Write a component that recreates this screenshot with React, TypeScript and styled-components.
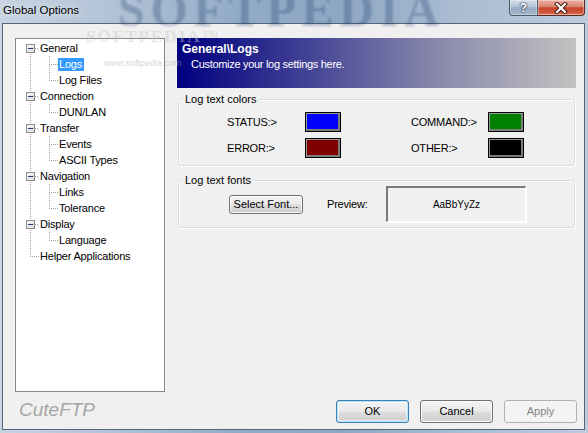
import React from 'react';
import styled, { createGlobalStyle } from 'styled-components';

const Global = createGlobalStyle`
  html, body { margin: 0; padding: 0; }
  body {
    width: 588px; height: 433px; overflow: hidden;
    background: #b9cde2;
    font-family: "Liberation Sans", Arial, sans-serif;
  }
`;

const Window = styled.div`
  position: relative;
  width: 588px;
  height: 433px;
  display: flex;
  flex-direction: column;
  overflow: hidden;
  background: linear-gradient(to right, #c8d4e2 0%, #b3c4d7 18%, #92abc7 40%, #8ea7c4 58%, #a9bcd2 78%, #bdccdd 100%);
`;

const TitleBar = styled.div`
  height: 23px;
  flex: none;
  display: flex;
  align-items: flex-start;
  position: relative;
`;

const TitleText = styled.div`
  padding: 4px 0 0 3px;
  font-size: 11.5px;
  line-height: 13px;
  color: #000;
  text-shadow: 0 0 6px rgba(255, 255, 255, 0.9);
  flex: 1;
  z-index: 1;
`;

const Controls = styled.div`
  display: flex;
  margin-right: 3px;
  z-index: 1;
`;

const CaptionButton = styled.div<{ $close?: boolean }>`
  box-sizing: border-box;
  width: ${p => (p.$close ? '47px' : '29px')};
  height: 16px;
  display: flex;
  align-items: center;
  justify-content: center;
  border: 1px solid ${p => (p.$close ? '#5a2a22' : '#4a5a6e')};
  border-top: none;
  border-left: ${p => (p.$close ? 'none' : undefined)};
  border-radius: ${p => (p.$close ? '0 0 4px 0' : '0 0 0 4px')};
  background: ${p =>
    p.$close
      ? 'linear-gradient(#eab0a3 0%, #d98670 45%, #c5452b 52%, #d1583a 85%, #e0866a 100%)'
      : 'linear-gradient(#d3dde8 0%, #b4c3d4 45%, #96abc3 52%, #a4b7cc 100%)'};
  box-shadow: inset 0 0 0 1px rgba(255, 255, 255, 0.35);
`;

const Client = styled.div`
  flex: 1;
  margin: 0 3px 3px 2px;
  border: 1px solid #55667b;
  background: #f0f0f0;
  display: flex;
  flex-direction: column;
  min-height: 0;
`;

const Body = styled.div`
  display: flex;
  gap: 12px;
  padding: 14px 0 0 12px;
`;

const Tree = styled.div`
  box-sizing: border-box;
  width: 150px;
  height: 354px;
  border: 1px solid #828790;
  background: #fff;
  padding-top: 1px;
`;

const TreeRow = styled.div`
  display: flex;
  align-items: center;
  height: 16px;
`;

const Gutter = styled.svg`
  flex: none;
  display: block;
`;

const Label = styled.span<{ $selected?: boolean }>`
  font-size: 11px;
  letter-spacing: -0.2px;
  line-height: 13px;
  height: 13px;
  padding: 0 2px 0 1px;
  white-space: nowrap;
  background: ${p => (p.$selected ? '#3399ff' : 'transparent')};
  color: ${p => (p.$selected ? '#fff' : '#000')};
`;

const Right = styled.div`
  width: 399px;
  display: flex;
  flex-direction: column;
`;

const Banner = styled.div`
  box-sizing: border-box;
  height: 50px;
  padding: 4px 0 0 5px;
  background: linear-gradient(to right, #000080 0%, #3d3d94 30%, #8888ac 65%, #c2c2c2 100%);
  color: #fff;
`;

const BannerTitle = styled.div`
  font-size: 12px;
  font-weight: bold;
  line-height: 14px;
`;

const BannerSub = styled.div`
  font-size: 11px;
  letter-spacing: -0.3px;
  line-height: 14px;
  margin: 1px 0 0 9px;
`;

const Group = styled.div<{ $top: number; $pad: string }>`
  position: relative;
  box-sizing: border-box;
  width: 397px;
  margin: ${p => p.$top}px 0 0 1px;
  padding: ${p => p.$pad};
  border: 1px solid #d5dfe5;
  border-radius: 3px;
  box-shadow: inset 1px 1px 0 #fff, 1px 1px 0 #fff;
`;

const Legend = styled.span`
  position: absolute;
  top: -7px;
  left: 4px;
  padding: 0 2px;
  background: #f0f0f0;
  font-size: 11px;
  line-height: 13px;
  color: #000;
`;

const ColorGrid = styled.div`
  display: grid;
  grid-template-columns: 78px 36px 70px 77px 36px;
  grid-auto-rows: 20px;
  row-gap: 6px;
  align-items: center;
`;

const FieldLabel = styled.span`
  font-size: 11px;
  letter-spacing: -0.2px;
  line-height: 13px;
  color: #000;
  white-space: nowrap;
`;

const Swatch = styled.div<{ $color: string }>`
  box-sizing: border-box;
  width: 36px;
  height: 20px;
  border: 1px solid #000;
  background: ${p => p.$color};
  box-shadow: inset 1px 1px 0 #9a9a9a, inset -2px -2px 0 #7d7d7d;
`;

const FontRow = styled.div`
  display: flex;
  align-items: center;
`;

const Button = styled.button<{ $variant?: 'default' | 'normal' | 'disabled' }>`
  box-sizing: border-box;
  width: 73px;
  height: 23px;
  padding: 0;
  font-family: "Liberation Sans", Arial, sans-serif;
  font-size: 11px;
  line-height: 13px;
  border-radius: 3px;
  border: 1px solid
    ${p => (p.$variant === 'default' ? '#3c7fb1' : p.$variant === 'disabled' ? '#adb2b5' : '#707070')};
  color: ${p => (p.$variant === 'disabled' ? '#838383' : '#000')};
  background: ${p =>
    p.$variant === 'disabled'
      ? '#f4f4f4'
      : 'linear-gradient(#f2f2f2 0%, #ebebeb 48%, #dddddd 52%, #cfcfcf 100%)'};
  box-shadow: ${p =>
    p.$variant === 'default'
      ? 'inset 0 0 0 1px #b6e2fb, inset 0 0 0 2px rgba(255,255,255,0.5)'
      : p.$variant === 'disabled'
      ? 'none'
      : 'inset 0 0 0 1px #fcfcfc'};
`;

const FontButton = styled(Button)`
  width: 74px;
  height: 19px;
  margin-top: 1px;
`;

const PreviewLabel = styled(FieldLabel)`
  margin: 0 0 0 24px;
  width: 59px;
`;

const PreviewBox = styled.div`
  box-sizing: border-box;
  width: 140px;
  height: 36px;
  display: flex;
  align-items: center;
  justify-content: center;
  border-style: solid;
  border-width: 2px 1px 1px 2px;
  border-color: #7a7a7a #ffffff #ffffff #7a7a7a;
  font-size: 10px;
  color: #000;
  box-shadow: 1px 1px 0 #fff;
`;

const Footer = styled.div`
  display: flex;
  align-items: center;
  height: 23px;
  margin-top: 8px;
  padding: 0 7px 0 16px;
`;

const Brand = styled.div`
  flex: 1;
  font-size: 19px;
  font-style: italic;
  color: #a6a6a6;
  line-height: 20px;
  margin-bottom: 3px;
`;

const ButtonRow = styled.div`
  display: flex;
  gap: 11px;
`;

const Watermark = styled.span<{ $x: number; $y: number; $size: number; $color: string; $serif?: boolean; $blur?: number }>`
  position: absolute;
  left: ${p => p.$x}px;
  top: ${p => p.$y}px;
  font-size: ${p => p.$size}px;
  line-height: 1;
  color: ${p => p.$color};
  font-family: ${p => (p.$serif ? '"Liberation Serif", "Times New Roman", serif' : '"Liberation Sans", Arial, sans-serif')};
  font-weight: ${p => (p.$serif ? 'bold' : 'normal')};
  letter-spacing: ${p => (p.$serif ? '0.12em' : '0')};
  filter: ${p => (p.$blur ? `blur(${p.$blur}px)` : 'none')};
  white-space: nowrap;
  pointer-events: none;
`;

type TreeNode = { label: string; children: string[] };

const treeData: TreeNode[] = [
  { label: 'General', children: ['Logs', 'Log Files'] },
  { label: 'Connection', children: ['DUN/LAN'] },
  { label: 'Transfer', children: ['Events', 'ASCII Types'] },
  { label: 'Navigation', children: ['Links', 'Tolerance'] },
  { label: 'Display', children: ['Language'] },
  { label: 'Helper Applications', children: [] },
];

const DOT = '#a0a0a0';

const RootGutter: React.FC<{ first: boolean; last: boolean; box: boolean }> = ({ first, last, box }) => (
  <Gutter width={23} height={16} shapeRendering="crispEdges">
    <line x1={14.5} y1={first ? 8 : 0} x2={14.5} y2={last ? 9 : 16} stroke={DOT} strokeDasharray="1 1" />
    <line x1={box ? 19 : 16} y1={8.5} x2={23} y2={8.5} stroke={DOT} strokeDasharray="1 1" />
    {box && (
      <>
        <defs>
          <linearGradient id="bx" x1="0" y1="0" x2="1" y2="1">
            <stop offset="0" stopColor="#ffffff" />
            <stop offset="1" stopColor="#d8d8d8" />
          </linearGradient>
        </defs>
        <rect x={10.5} y={4.5} width={8} height={8} fill="url(#bx)" stroke="#8d8d8d" />
        <line x1={12} y1={8.5} x2={17} y2={8.5} stroke="#1d3b66" />
      </>
    )}
  </Gutter>
);

const ChildGutter: React.FC<{ last: boolean }> = ({ last }) => (
  <Gutter width={42} height={16} shapeRendering="crispEdges">
    <line x1={14.5} y1={0} x2={14.5} y2={16} stroke={DOT} strokeDasharray="1 1" />
    <line x1={33.5} y1={0} x2={33.5} y2={last ? 9 : 16} stroke={DOT} strokeDasharray="1 1" />
    <line x1={35} y1={8.5} x2={42} y2={8.5} stroke={DOT} strokeDasharray="1 1" />
  </Gutter>
);

const CloseGlyph = () => (
  <svg width={14} height={12} viewBox="0 0 14 12">
    <path d="M3 2 L11 10 M11 2 L3 10" stroke="#4a1e16" strokeWidth={4.2} strokeLinecap="square" />
    <path d="M3 2 L11 10 M11 2 L3 10" stroke="#ffffff" strokeWidth={2.2} strokeLinecap="square" />
  </svg>
);

const HelpGlyph = styled.span`
  font-size: 12px;
  font-weight: bold;
  color: #fff;
  line-height: 12px;
  text-shadow: 0 0 1px #2a3a50, 0 0 1px #2a3a50, 0 0 2px #2a3a50;
`;

const colorRows = [
  [
    { label: 'STATUS:>', color: '#0000ff' },
    { label: 'COMMAND:>', color: '#008000' },
  ],
  [
    { label: 'ERROR:>', color: '#800000' },
    { label: 'OTHER:>', color: '#000000' },
  ],
];

export default function App() {
  return (
    <>
      <Global />
      <Window>
        <Watermark $x={118} $y={-14} $size={48} $color="rgba(25,55,105,0.28)" $serif $blur={1.2}>
          SOFTPEDIA
        </Watermark>
        <TitleBar>
          <TitleText>Global Options</TitleText>
          <Controls>
            <CaptionButton>
              <HelpGlyph>?</HelpGlyph>
            </CaptionButton>
            <CaptionButton $close>
              <CloseGlyph />
            </CaptionButton>
          </Controls>
        </TitleBar>
        <Client>
          <Body>
            <Tree>
              {treeData.map((node, i) => (
                <React.Fragment key={node.label}>
                  <TreeRow>
                    <RootGutter first={i === 0} last={i === treeData.length - 1} box={node.children.length > 0} />
                    <Label>{node.label}</Label>
                  </TreeRow>
                  {node.children.map((c, j) => (
                    <TreeRow key={c}>
                      <ChildGutter last={j === node.children.length - 1} />
                      <Label $selected={c === 'Logs'}>{c}</Label>
                    </TreeRow>
                  ))}
                </React.Fragment>
              ))}
            </Tree>
            <Right>
              <Banner>
                <BannerTitle>General\Logs</BannerTitle>
                <BannerSub>Customize your log settings here.</BannerSub>
              </Banner>
              <Group $top={11} $pad="12px 0 7px 48px">
                <Legend>Log text colors</Legend>
                <ColorGrid>
                  {colorRows.map((row, r) => (
                    <React.Fragment key={r}>
                      <FieldLabel>{row[0].label}</FieldLabel>
                      <Swatch $color={row[0].color} />
                      <span />
                      <FieldLabel>{row[1].label}</FieldLabel>
                      <Swatch $color={row[1].color} />
                    </React.Fragment>
                  ))}
                </ColorGrid>
              </Group>
              <Group $top={14} $pad="5px 0 5px 50px">
                <Legend>Log text fonts</Legend>
                <FontRow>
                  <FontButton $variant="normal">Select Font...</FontButton>
                  <PreviewLabel>Preview:</PreviewLabel>
                  <PreviewBox>AaBbYyZz</PreviewBox>
                </FontRow>
              </Group>
            </Right>
          </Body>
          <Footer>
            <Brand>CuteFTP</Brand>
            <ButtonRow>
              <Button $variant="default">OK</Button>
              <Button $variant="normal">Cancel</Button>
              <Button $variant="disabled">Apply</Button>
            </ButtonRow>
          </Footer>
        </Client>
        <Watermark $x={86} $y={28} $size={17} $color="rgba(200,200,200,0.45)" $serif>
          SOFTPEDIA™
        </Watermark>
        <Watermark $x={104} $y={59} $size={9} $color="rgba(175,175,175,0.55)">
          www.softpedia.com
        </Watermark>
      </Window>
    </>
  );
}
